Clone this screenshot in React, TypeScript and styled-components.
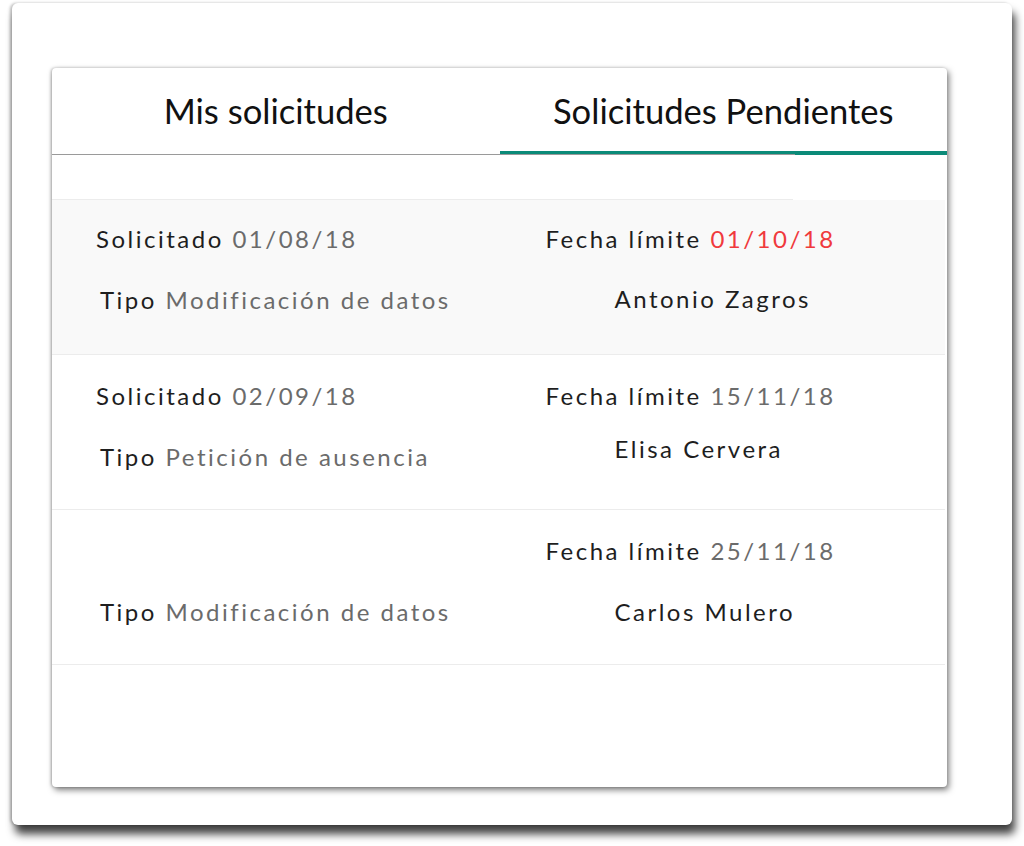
import React from 'react';
import styled, { createGlobalStyle } from 'styled-components';

const GlobalStyle = createGlobalStyle`
  html, body {
    margin: 0;
    padding: 0;
    background: #ffffff;
  }
  body {
    font-family: Lato, "Open Sans", sans-serif;
  }
`;

const Page = styled.div`
  width: 1024px;
  height: 846px;
  padding: 3px 12px 0 12px;
  box-sizing: border-box;
`;

const Frame = styled.div`
  width: 1000px;
  height: 822px;
  box-sizing: border-box;
  padding: 65px 65px 38px 40px;
  background: #ffffff;
  border-radius: 6px;
  box-shadow: 3px 9px 9px rgba(0, 0, 0, 0.75), -2px 0 3px rgba(0, 0, 0, 0.25);
`;

const Card = styled.div`
  height: 100%;
  background: #ffffff;
  border-radius: 4px;
  overflow: hidden;
  box-shadow: 2px 3px 6px rgba(0, 0, 0, 0.5), -1px 0 3px rgba(0, 0, 0, 0.25);
`;

const TabBar = styled.div`
  display: flex;
  height: 87px;
  position: relative;

  &::after {
    content: '';
    position: absolute;
    left: 0;
    bottom: 0;
    width: 83%;
    height: 1px;
    background: #9a9a9a;
  }
`;

const Tab = styled.div<{ $active?: boolean }>`
  flex: 1;
  display: flex;
  align-items: center;
  justify-content: center;
  font-size: 34.6px;
  color: #111;
  box-sizing: border-box;
  padding-top: ${(p) => (p.$active ? '2px' : '0')};
  padding-bottom: ${(p) => (p.$active ? '0' : '3px')};
  border-bottom: ${(p) => (p.$active ? '4px solid #0b8a78' : '0')};
`;

const Spacer = styled.div`
  height: 45px;
`;

const Row = styled.div<{ $shaded?: boolean; $first?: boolean }>`
  position: relative;
  display: grid;
  grid-template-columns: 1fr 1fr;
  height: 154px;
  margin-right: 2px;
  background: ${(p) => (p.$shaded ? '#f9f9f9' : '#ffffff')};
  border-bottom: 1px solid #ececec;

  &::before {
    content: ${(p) => (p.$first ? "''" : 'none')};
    position: absolute;
    top: -1px;
    left: 0;
    width: 83%;
    height: 1px;
    background: #ececec;
  }
`;

const Cell = styled.div<{ $right?: boolean; $top: number }>`
  display: flex;
  flex-direction: column;
  padding-top: ${(p) => p.$top}px;
  padding-left: ${(p) => (p.$right ? '47px' : '44px')};
`;

const Line = styled.div<{ $gap?: number; $indent?: number }>`
  height: 30px;
  line-height: 30px;
  font-size: 24px;
  letter-spacing: 2.5px;
  color: #1e1e1e;
  white-space: nowrap;
  margin-top: ${(p) => p.$gap ?? 0}px;
  padding-left: ${(p) => p.$indent ?? 0}px;
`;

const Value = styled.span<{ $alert?: boolean }>`
  color: ${(p) => (p.$alert ? '#f03a3d' : '#6b6b6b')};
`;

type Request = {
  requested?: string;
  type: string;
  deadline: string;
  alert?: boolean;
  person: string;
  personGap: number;
  top: number;
};

const requests: Request[] = [
  { requested: '01/08/18', type: 'Modificación de datos', deadline: '01/10/18', alert: true, person: 'Antonio Zagros', personGap: 30, top: 24 },
  { requested: '02/09/18', type: 'Petición de ausencia', deadline: '15/11/18', person: 'Elisa Cervera', personGap: 23, top: 26 },
  { type: 'Modificación de datos', deadline: '25/11/18', person: 'Carlos Mulero', personGap: 31, top: 26 },
];

export default function App() {
  return (
    <>
      <GlobalStyle />
      <Page>
        <Frame>
          <Card>
            <TabBar>
              <Tab>Mis solicitudes</Tab>
              <Tab $active>Solicitudes Pendientes</Tab>
            </TabBar>
            <Spacer />
            {requests.map((r, i) => (
              <Row key={i} $shaded={i === 0} $first={i === 0}>
                <Cell $top={r.top}>
                  <Line>
                    {r.requested && (
                      <>
                        Solicitado <Value>{r.requested}</Value>
                      </>
                    )}
                  </Line>
                  <Line $gap={31} $indent={4}>
                    Tipo <Value>{r.type}</Value>
                  </Line>
                </Cell>
                <Cell $right $top={r.top}>
                  <Line>
                    Fecha límite <Value $alert={r.alert}>{r.deadline}</Value>
                  </Line>
                  <Line $gap={r.personGap} $indent={69}>
                    {r.person}
                  </Line>
                </Cell>
              </Row>
            ))}
          </Card>
        </Frame>
      </Page>
    </>
  );
}
